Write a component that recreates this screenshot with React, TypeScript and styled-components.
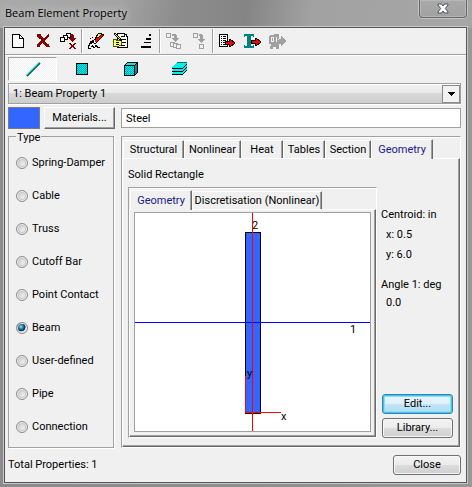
import React, { useState } from "react";
import styled, { createGlobalStyle, css } from "styled-components";

const GlobalStyle = createGlobalStyle`
  *, *::before, *::after { box-sizing: border-box; }
  body { margin: 0; }
  body, button, input, select {
    font-family: Roboto, Tahoma, sans-serif;
    font-size: 11px;
    line-height: 14px;
    color: #000;
  }
  button { margin: 0; padding: 0; }
`;

const face = "#f0f0f0";
const shadow = "#a0a0a0";
const dark = "#696969";

const Window = styled.div`
  display: flex;
  flex-direction: column;
  min-height: 100vh;
  padding: 0 5px 4px 4px;
  background:
    linear-gradient(100deg, #a9a9a9 0, #a4a4a4 25%, #8c8c8c 38%, #858585 52%, #a2a2a2 66%, #a6a6a6 100%) top / 100% 28px no-repeat,
    linear-gradient(90deg, #8b8b8e, #8f8f8f 60%, #999);
`;

const TitleBar = styled.header`
  display: flex;
  justify-content: space-between;
  align-items: flex-start;
  height: 27px;
`;

const Title = styled.h1`
  margin: 4px 0 0 1px;
  font: 11px/18px "Open Sans", "Noto Sans", sans-serif;
  text-shadow: 0 0 6px #ccc, 0 0 10px #ccc;
`;

const CloseBox = styled.button`
  display: flex;
  align-items: center;
  justify-content: center;
  width: 48px;
  height: 18px;
  border: 1px solid #66666a;
  border-top: 0;
  border-radius: 0 0 4px 4px;
  background: linear-gradient(#a9a9a9, #a1a1a1);
  box-shadow: 0 0 0 1px #c4c4c4, inset 0 0 0 1px #b7b7b7;
`;

const Client = styled.main`
  flex: 1;
  display: flex;
  flex-direction: column;
  border: 1px solid #555;
  box-shadow: 0 0 0 1px #c8c8c8;
  background: ${face};
`;

const Toolbar = styled.div`
  display: flex;
  height: 28px;
  border-bottom: 1px solid #fff;
  box-shadow: inset 0 -1px ${shadow};
`;

const ToolButton = styled.button`
  width: 25px;
  height: 26px;
  padding: 2px;
  border: 0;
  background: none;
  svg { display: block; }
`;

const Separator = styled.span`
  width: 2px;
  height: 24px;
  margin: 1px 0 1px 1px;
  background: linear-gradient(90deg, ${shadow} 50%, #fff 50%);
`;

const Modes = styled.div`
  display: flex;
  height: 27px;
  padding: 1px 3px 2px;
`;

const ModeButton = styled.button<{ $active: boolean }>`
  display: flex;
  align-items: center;
  justify-content: center;
  width: 49px;
  border: 1px solid transparent;
  background: none;
  ${(p) =>
    p.$active &&
    css`
      border-color: ${shadow} #fff #fff ${shadow};
      background: repeating-conic-gradient(#fff 0 25%, ${face} 0 50%) 0 0 / 2px 2px;
    `}
`;

const Body = styled.div`
  flex: 1;
  display: flex;
  flex-direction: column;
  padding: 0 5px 0 3px;
`;

const Combo = styled.div`
  position: relative;
  height: 21px;
  border: 1px solid ${shadow};
  box-shadow: 0 1px #fff, inset 0 1px #fff;
  background: linear-gradient(#f2f2f2, #e8e8e8 48%, #d8d8d8 50%, #cdcdcd);
`;

const ComboSelect = styled.select`
  appearance: none;
  display: block;
  width: 100%;
  height: 19px;
  padding: 0 20px 0 4px;
  border: 0;
  outline: 0;
  background: none;
`;

const ComboArrow = styled.span`
  position: absolute;
  top: 1px;
  right: 0;
  bottom: 0;
  display: flex;
  align-items: center;
  justify-content: center;
  width: 18px;
  border: 1px solid #8a8a8a;
  background: #f2f2f2;
  pointer-events: none;
`;

const MaterialRow = styled.div`
  display: flex;
  align-items: center;
  height: 22px;
  margin: 3px 0 7px;
`;

const Swatch = styled.button`
  width: 32px;
  height: 22px;
  border: 1px solid #7a7a7a;
  background: #3366ff;
`;

const RaisedButton = styled.button`
  width: 71px;
  height: 22px;
  margin: 0 6px 0 4px;
  border: 1px solid;
  border-color: #fff ${dark} ${dark} #fff;
  box-shadow: inset -1px -1px ${shadow};
  background: ${face};
`;

const NameInput = styled.input`
  flex: 1;
  min-width: 0;
  height: 20px;
  padding: 0 4px;
  border: 1px solid ${shadow};
  outline: 0;
  background: #fff;
`;

const Columns = styled.div`
  flex: 1;
  display: flex;
  gap: 7px;
`;

const TypeGroup = styled.fieldset`
  flex: none;
  width: 106px;
  margin: -8px 0 0;
  padding: 1px 0 0 7px;
  border: 1px solid ${shadow};
  box-shadow: 1px 1px #fff;
`;

const TypeLegend = styled.legend`
  padding: 3px 1px 0;
`;

const RadioLabel = styled.label`
  display: flex;
  align-items: center;
  gap: 4px;
  height: 33px;
  white-space: nowrap;
`;

const Radio = styled.input`
  appearance: none;
  flex: none;
  width: 12px;
  height: 12px;
  margin: 0;
  border: 1px solid #8a8a8a;
  border-radius: 50%;
  background: linear-gradient(135deg, #bfc3c8, #f2f2f2 75%);
  box-shadow: inset 0 0 0 1px #f4f4f4, inset 0 0 0 2px #c4c6ca;
  &:checked {
    background: radial-gradient(circle at 40% 38%, #bfe6f7 0, #3f97bd 18%, #10405f 42%, #0d3550 50%, #d8dde0 56%);
    box-shadow: inset 0 0 0 1px #f4f4f4;
  }
`;

const TabSet = styled.section`
  flex: 1;
  min-width: 0;
  display: flex;
  flex-direction: column;
  border: 1px solid;
  border-color: ${shadow} #fff #fff ${shadow};
`;

const TabList = styled.div`
  display: flex;
  align-items: flex-end;
  height: 21px;
  padding-left: 1px;
  box-shadow: inset 0 1px #fff;
`;

const Tab = styled.button<{ $width: number; $active?: boolean }>`
  flex: none;
  width: ${(p) => p.$width}px;
  height: 18px;
  border: 1px solid;
  border-color: #fff ${dark} ${dark} #fff;
  border-bottom: 0;
  border-radius: 2px 1px 0 0;
  box-shadow: inset -1px 0 ${shadow};
  background: ${face};
  white-space: nowrap;
  ${(p) =>
    p.$active &&
    css`
      z-index: 1;
      height: 20px;
      margin-bottom: -1px;
      color: #1a1a8c;
    `}
`;

const Page = styled.div`
  flex: 1;
  display: flex;
  flex-direction: column;
  border: 1px solid;
  border-color: #fff ${dark} ${dark} #fff;
  box-shadow: inset -1px -1px ${shadow};
`;

const OuterContent = styled.div`
  flex: 1;
  display: flex;
  flex-direction: column;
  padding: 9px 5px 8px;
`;

const SectionName = styled.p`
  margin: 0 0 5px;
`;

const Split = styled.div`
  flex: 1;
  display: flex;
  gap: 4px;
`;

const Drawing = styled.div`
  flex: 1;
  display: flex;
  margin: 2px 4px 4px;
  border: 1px solid ${shadow};
  background: #fff;
  svg { display: block; width: 100%; height: 218px; }
`;

const Side = styled.aside`
  flex: none;
  width: 73px;
  display: flex;
  flex-direction: column;
  padding-top: 21px;
  white-space: nowrap;
`;

const SideText = styled.p<{ $indent?: boolean; $gap: number }>`
  margin: 0 0 ${(p) => p.$gap}px;
  padding-left: ${(p) => (p.$indent ? 5 : 0)}px;
`;

const SideButtons = styled.div`
  display: flex;
  flex-direction: column;
  gap: 4px;
  margin-top: auto;
  margin-left: 1px;
`;

const PushButton = styled.button<{ $focused?: boolean; $width?: number }>`
  width: ${(p) => p.$width ?? 71}px;
  height: 20px;
  border: 1px solid #707070;
  border-radius: 3px;
  background: linear-gradient(#f3f3f3, #ebebeb 50%, #dddddd 50%, #cfcfcf);
  box-shadow: inset 0 0 0 1px #f8f8f8;
  ${(p) =>
    p.$focused &&
    css`
      border-color: #3c7fb1;
      background: linear-gradient(#e6f4fc, #dff1fb 50%, #c4e5f6 50%, #b2dcf2);
      box-shadow: inset 0 0 0 1px #35c8f5, inset 0 0 0 2px #8fdcf8;
    `}
`;

const Footer = styled.footer`
  display: flex;
  justify-content: space-between;
  align-items: center;
  height: 34px;
`;

const Pic = ({ children }: { children: React.ReactNode }) => (
  <svg width="21" height="22" viewBox="0 0 21 22" shapeRendering="crispEdges" aria-hidden="true">
    {children}
  </svg>
);

const NewIcon = () => (
  <Pic>
    <path d="M5.5 4.5H12.5L16.5 8.5V17.5H5.5Z" fill="#fff" stroke="#000" />
    <path d="M12.5 4.5V8.5H16.5" fill="none" stroke="#000" />
  </Pic>
);

const DeleteIcon = () => (
  <Pic>
    <path d="M5 4h4v2h1v1h1v1h2V7h1V6h1V5h1V4h1v3h-1v1h-1v1h-1v1h-1v2h1v1h1v1h2v2h1v1h-4v-1h-1v-1h-1v-1h-1v-1h-1v1H9v1H8v2H5v-3h1v-1h1v-1h1v-1h1v-2H8V9H7V8H6V7H5Z" fill="#8b0000" />
  </Pic>
);

const PurgeIcon = () => (
  <Pic>
    <g fill="#fff" stroke="#000">
      <path d="M9.5 3.5h4v4h-4z" />
      <path d="M6.5 5.5h4v4h-4z" />
      <path d="M3.5 7.5h4v4h-4z" />
    </g>
    <path d="M14 4h2v1h1v3h2v1h-1v1h-1v1h-1v1h-1v-1h-1v-1h-1V9h-1V8h2V6h-1V4Z" fill="#8b0000" />
    <path d="M12 13h2v1h1v1h1v-1h1v-1h2v1h-1v1h-1v2h1v1h1v1h-2v-1h-1v-1h-1v1h-1v1h-2v-1h1v-1h1v-2h-1v-1h-1z" fill="#8b0000" />
  </Pic>
);

const EraseIcon = () => (
  <Pic>
    <path d="M13 3h4v1h2v2h-1v1h-1v1h-1v1h-1v1h-1v1h-1v1h-1v1h-1v1H9v-1H8v-3h1V9h1V7h1V5h1V4h1z" fill="#000" />
    <path d="M13 4h3v1h-1v1h-1v1h-2V6h1z" fill="#ffff00" />
    <path d="M16 5h2v1h-1v1h-1v1h-1v1h-1v1h-1V8h1V7h1V6h1z M11 8h2v3h-1v1h-2v-2h1z" fill="#ff0000" />
    <path d="M9 10h1v2h1v1H9z" fill="#fff" />
    <path d="M5 8h1v1H5zM7 7h1v1H7zM5 11h2v-1h1v3H7v1H5v2H4v2H3v-3h1v-2h1zM7 15h1v1h1v1h1v1H8v-1H6v-1h1zM10 15h2v1h1v1h2v1h-3v-1h-2zM5 18h1v1H5zM3 18h2v1H3z" fill="#000" />
  </Pic>
);

const EditIcon = () => (
  <Pic>
    <path d="M7.5 3.5h7v1h2v2h1v11h-10z" fill="#fff" stroke="#000" />
    <path d="M11 6h4v1h-4zM12 9h4v1h-4zM12 12h4v1h-4zM10 15h5v1h-5zM14 4h1v3h-1z" fill="#000" />
    <path d="M3.5 9.5h2l2 1h3l1 1v3l-3 2h-5z" fill="#ffff66" stroke="#555500" />
    <path d="M6 12h3M6 14h3" stroke="#000" />
    <path d="M4 3h2v1h1v1h1v1h1v1h1v1h1v1h1v2h-2v-1H9V9H8V8H7V7H6V6H5V5H4z" fill="#000" />
    <path d="M5 4h1v1h1v1h1v1h1v1h1v1H9V8H8V7H7V6H6V5H5z" fill="#ffff00" />
    <path d="M3 13h1v1H3zM3 15h1v1H3z" fill="#00a0a0" />
  </Pic>
);

const SortIcon = () => (
  <Pic>
    <path d="M14 4h2v2h-2zM11 8h5v2h-5zM9 12h7v1H9zM6 16h10v2H6z" fill="#000" />
  </Pic>
);

const CopyManyIcon = () => (
  <Pic>
    <g fill={face} stroke={shadow}>
      <path d="M3.5 3.5h4v4h-4z" />
      <path d="M7.5 12.5h4v4h-4z" />
      <path d="M10.5 13.5h4v4h-4z" />
      <path d="M13.5 14.5h4v4h-4z" />
    </g>
    <path d="M9 4h4v1h1v3h2v1h-1v1h-1v1h-1v1h-1v-1h-1v-1h-1V9H9V8h2V6H9z" fill={shadow} />
  </Pic>
);

const CopyOneIcon = () => (
  <Pic>
    <path d="M5.5 3.5h4v4h-4zM11.5 14.5h4v4h-4z" fill="none" stroke={shadow} />
    <path d="M11 4h3v1h1v4h2v1h-1v1h-1v1h-1v1h-1v-1h-1v-1h-1v-1h-1V9h2V6h-1z" fill={shadow} />
  </Pic>
);

const ExportListIcon = () => (
  <Pic>
    <path d="M3.5 4.5h8v12h-8z" fill="#fff" stroke="#000" />
    <path d="M5 6h1v1H5zM7 6h3v1H7zM5 8h1v1H5zM7 8h3v1H7zM5 10h1v1H5zM7 10h3v1H7zM5 12h1v1H5zM7 12h2v1H7zM5 14h1v1H5zM7 14h2v1H7z" fill="#000" />
    <path d="M9.5 11.5h4v-2h1l4 3v1l-4 3h-1v-2h-4z" fill="#ff0000" stroke="#000" />
  </Pic>
);

const ExportBeamIcon = () => (
  <Pic>
    <path d="M3 4h10v3h-1V6h-2v10h2v-1h1v3H3v-3h1v1h2V6H4v1H3z" fill="#008080" />
    <path d="M10.5 10.5h4v-2h1l4 3v1l-4 3h-1v-2h-4z" fill="#ff0000" stroke="#000" />
  </Pic>
);

const ExportModelIcon = () => (
  <Pic>
    <path d="M3 6h1V5h4V4h5v5h2V6h1v1h1v1h1v1h1v1h1v2h-1v1h-1v1h-1v1h-1v1h-1v-2h-2v5h-3v-2H7v2H4v-3h1v-2H3z" fill={shadow} />
    <path d="M5 7h3v5H5zM10 7h1v5h-1zM12 9h1v1h-1z" fill={face} />
    <path d="M6 8h1v3H6z" fill={shadow} />
  </Pic>
);

const LineIcon = () => (
  <svg width="16" height="16" viewBox="0 0 16 16" aria-hidden="true">
    <path d="M2 15L15 2" stroke="#000" strokeWidth="1.5" />
    <path d="M1.5 14.5L14.5 1.5" stroke="#00c8c8" strokeWidth="1.5" />
  </svg>
);

const Dither = ({ id }: { id: string }) => (
  <pattern id={id} width="2" height="2" patternUnits="userSpaceOnUse">
    <path d="M0 0h2v2H0z" fill="#00f0f0" />
    <path d="M0 0h1v1H0zM1 1h1v1H1z" fill="#00a8b0" />
  </pattern>
);

const PlateIcon = () => (
  <svg width="12" height="12" viewBox="0 0 12 12" shapeRendering="crispEdges" aria-hidden="true">
    <Dither id="plate" />
    <path d="M.5.5h11v11H.5z" fill="url(#plate)" stroke="#000" />
  </svg>
);

const BrickIcon = () => (
  <svg width="14" height="14" viewBox="0 0 14 14" shapeRendering="crispEdges" aria-hidden="true">
    <Dither id="brick" />
    <path d="M.5 3.5L3.5.5H13.5V10.5L10.5 13.5H.5Z" fill="#00e8e8" stroke="#000" />
    <path d="M10.5 3.5L13.5.5V10.5L10.5 13.5Z" fill="#009090" stroke="#000" />
    <path d="M.5 3.5h10v10H.5z" fill="url(#brick)" stroke="#000" />
  </svg>
);

const sheet = "M0 6V5h1V4h1V3h1V2h1V1h1V0h10v2h-1v1h-1v1h-1v1h-1v1z";

const LayersIcon = () => (
  <svg width="16" height="14" viewBox="0 0 16 14" shapeRendering="crispEdges" aria-hidden="true">
    {[6, 3, 0].map((y) => (
      <g key={y} transform={`translate(0 ${y})`}>
        <path d={sheet} transform="translate(0 1)" fill="#000" />
        <path d={sheet} fill="#00f0f0" />
      </g>
    ))}
    <path d="M5 0h10v1H5z" fill="#007070" />
  </svg>
);

const tools = [
  [["New", NewIcon], ["Delete", DeleteIcon], ["Delete unused", PurgeIcon]],
  [["Erase", EraseIcon], ["Edit name", EditIcon], ["Sort", SortIcon]],
  [["Copy to many", CopyManyIcon], ["Copy", CopyOneIcon]],
  [["Export list", ExportListIcon], ["Export beam", ExportBeamIcon], ["Export model", ExportModelIcon]],
] as [string, React.ComponentType][][];

const modes = [
  ["Beam", LineIcon],
  ["Plate", PlateIcon],
  ["Brick", BrickIcon],
  ["Ply", LayersIcon],
] as [string, React.ComponentType][];

const types = ["Spring-Damper", "Cable", "Truss", "Cutoff Bar", "Point Contact", "Beam", "User-defined", "Pipe", "Connection"];

const outerTabs: [string, number][] = [
  ["Structural", 61],
  ["Nonlinear", 57],
  ["Heat", 42],
  ["Tables", 42],
  ["Section", 46],
  ["Geometry", 62],
];

const SectionDrawing = () => (
  <svg viewBox="0 0 235 218" shapeRendering="crispEdges" role="img" aria-label="Solid rectangle section">
    <rect x="110.5" y="19.5" width="15" height="181" fill="#3366ff" stroke="#000" />
    <path d="M0 109.5H235" stroke="#0000ff" />
    <path d="M117.5 0V218M110.5 163V199.5H146" fill="none" stroke="#ff0000" />
    <text x="117" y="16">2</text>
    <text x="215" y="120">1</text>
    <text x="112" y="164">y</text>
    <text x="146" y="207">x</text>
  </svg>
);

export default function App() {
  const [mode, setMode] = useState("Beam");
  const [type, setType] = useState("Beam");
  return (
    <Window>
      <GlobalStyle />
      <TitleBar>
        <Title>Beam Element Property</Title>
        <CloseBox aria-label="Close window">
          <svg width="12" height="11" viewBox="0 0 12 11" aria-hidden="true">
            <path d="M1 1h3.5L6 3 7.5 1H11v1L8.3 5.5 11 9v1H7.5L6 8 4.5 10H1V9l2.7-3.5L1 2z" fill="#fff" stroke="#4b4f5c" />
          </svg>
        </CloseBox>
      </TitleBar>
      <Client>
        <Toolbar role="toolbar" aria-label="Properties">
          {tools.map((group, i) => (
            <React.Fragment key={i}>
              {i > 0 && <Separator />}
              {group.map(([name, Icon]) => (
                <ToolButton key={name} aria-label={name}>
                  <Icon />
                </ToolButton>
              ))}
            </React.Fragment>
          ))}
        </Toolbar>
        <Modes role="toolbar" aria-label="Element kind">
          {modes.map(([name, Icon]) => (
            <ModeButton key={name} aria-label={name} $active={mode === name} onClick={() => setMode(name)}>
              <Icon />
            </ModeButton>
          ))}
        </Modes>
        <Body>
          <Combo>
            <ComboSelect aria-label="Property">
              <option>1: Beam Property 1</option>
            </ComboSelect>
            <ComboArrow>
              <svg width="7" height="4" viewBox="0 0 7 4" shapeRendering="crispEdges" aria-hidden="true">
                <path d="M0 0h7v1H6v1H5v1H4v1H3V3H2V2H1V1H0z" />
              </svg>
            </ComboArrow>
          </Combo>
          <MaterialRow>
            <Swatch aria-label="Colour" />
            <RaisedButton>Materials...</RaisedButton>
            <NameInput aria-label="Material name" defaultValue="Steel" />
          </MaterialRow>
          <Columns>
            <TypeGroup>
              <TypeLegend>Type</TypeLegend>
              {types.map((name) => (
                <RadioLabel key={name}>
                  <Radio type="radio" name="type" checked={type === name} onChange={() => setType(name)} />
                  {name}
                </RadioLabel>
              ))}
            </TypeGroup>
            <TabSet>
              <TabList role="tablist">
                {outerTabs.map(([name, width]) => (
                  <Tab key={name} role="tab" aria-selected={name === "Geometry"} $width={width} $active={name === "Geometry"}>
                    {name}
                  </Tab>
                ))}
              </TabList>
              <Page>
                <OuterContent>
                  <SectionName>Solid Rectangle</SectionName>
                  <Split>
                    <TabSet>
                      <TabList role="tablist">
                        <Tab role="tab" aria-selected $width={62} $active>Geometry</Tab>
                        <Tab role="tab" aria-selected={false} $width={130}>Discretisation (Nonlinear)</Tab>
                      </TabList>
                      <Page>
                        <Drawing>
                          <SectionDrawing />
                        </Drawing>
                      </Page>
                    </TabSet>
                    <Side>
                      <SideText $gap={6}>Centroid: in</SideText>
                      <SideText $gap={6} $indent>x: 0.5</SideText>
                      <SideText $gap={16} $indent>y: 6.0</SideText>
                      <SideText $gap={4}>Angle 1: deg</SideText>
                      <SideText $gap={0} $indent>0.0</SideText>
                      <SideButtons>
                        <PushButton $focused>Edit...</PushButton>
                        <PushButton>Library...</PushButton>
                      </SideButtons>
                    </Side>
                  </Split>
                </OuterContent>
              </Page>
            </TabSet>
          </Columns>
          <Footer>
            <span>Total Properties: 1</span>
            <PushButton $width={68}>Close</PushButton>
          </Footer>
        </Body>
      </Client>
    </Window>
  );
}
